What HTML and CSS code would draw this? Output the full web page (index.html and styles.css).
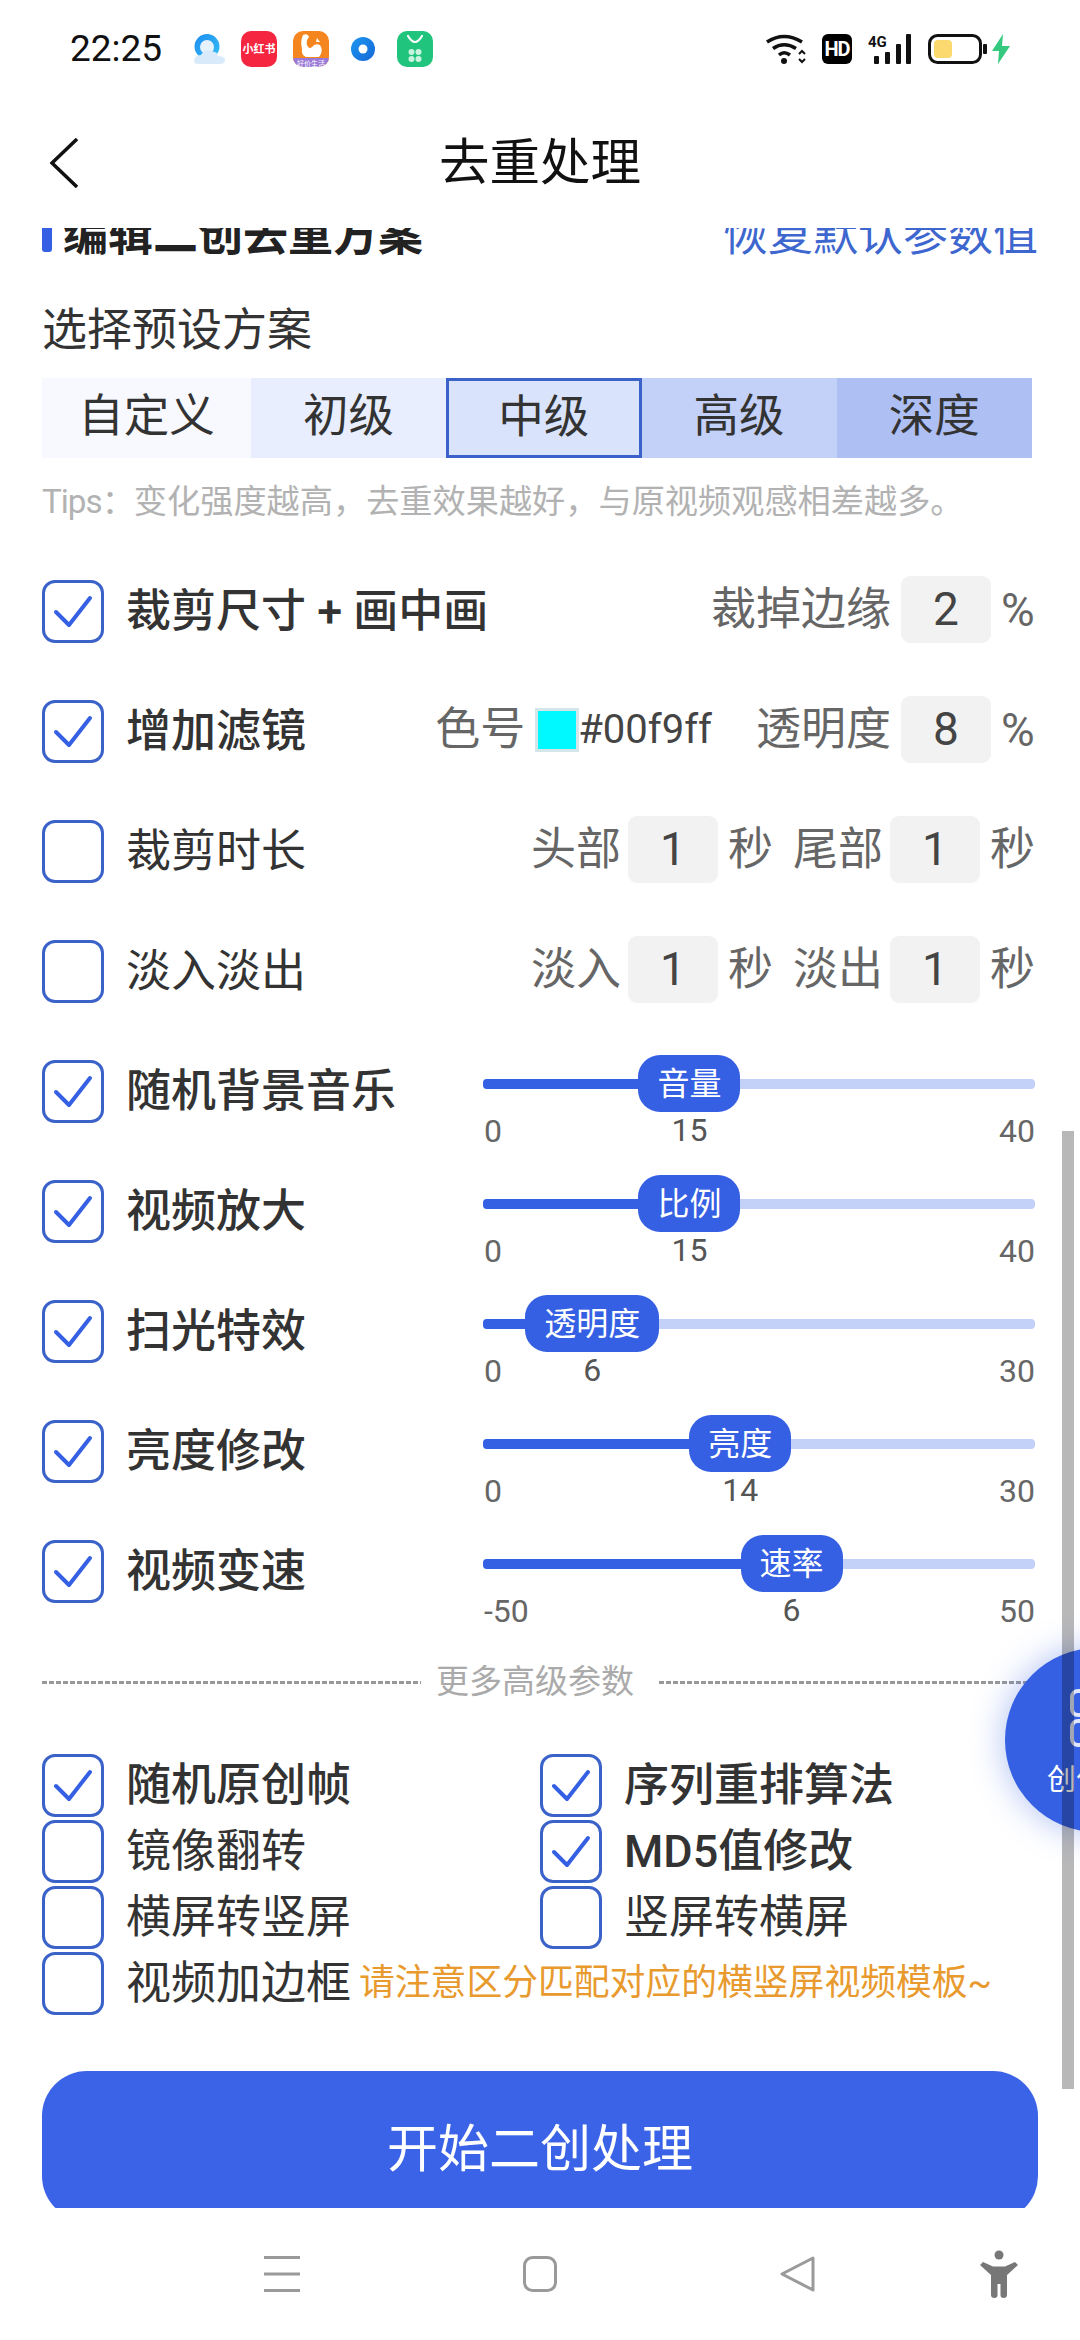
FILE: index.html
```html
<!DOCTYPE html>
<html lang="zh-CN">
<head>
<meta charset="utf-8">
<title>去重处理</title>
<link rel="stylesheet" href="styles.css">
</head>
<body>
<svg class="defs" width="0" height="0" aria-hidden="true">
  <symbol id="check" viewBox="0 0 62 63"><path d="M14 32 L27 45 L48 18" fill="none" stroke="#3560e3" stroke-width="4" stroke-linecap="round" stroke-linejoin="round"/></symbol>
</svg>
<div class="phone">
  <div class="status">
    <span class="time">22:25</span>
    <div class="apps">
      <svg class="app a-qq" width="33" height="30" viewBox="0 0 33 30"><defs><linearGradient id="qqg" x1="0" y1="0" x2="1" y2="1"><stop offset="0" stop-color="#1c8cf0"/><stop offset="1" stop-color="#37c0f5"/></linearGradient></defs><circle cx="15" cy="12.500" r="12.500" fill="url(#qqg)"/><circle cx="15" cy="13" r="7" fill="#e6f2fc"/><path d="M2 27 Q2 21 9 21 Q12 15 19 17 Q26 18 26 22 Q33 22 33 26 Q33 30 28 30 L6 30 Q2 30 2 27Z" fill="#d9ebfa"/></svg>
      <svg class="app a-red" width="36" height="36" viewBox="0 0 36 36"><rect width="36" height="36" rx="10" fill="#f5263f"/><text x="18" y="22" text-anchor="middle" class="app-text">小红书</text></svg>
      <svg class="app a-org" width="36" height="36" viewBox="0 0 36 36"><defs><clipPath id="orc"><rect width="36" height="36" rx="10"/></clipPath></defs><g clip-path="url(#orc)"><rect width="36" height="36" fill="#f5861f"/><rect y="27" width="36" height="9" fill="#9a78d8"/><path d="M10 4 Q15 2 16 6 Q13 9 14 14 Q16 19 19 16 Q22 12 27 14 Q31 20 26 26 L13 26 Q8 24 9 18 Q7 10 10 4Z" fill="#fff"/><path d="M24 7 L27 11 L23 11Z" fill="#fff"/></g><text x="18" y="34.500" text-anchor="middle" class="app-text-sm">好价生活</text></svg>
      <svg class="app a-don" width="24" height="24" viewBox="0 0 24 24"><defs><linearGradient id="dng" x1="0" y1="0" x2="1" y2="1"><stop offset="0" stop-color="#1f97ef"/><stop offset="1" stop-color="#1467d8"/></linearGradient></defs><circle cx="12" cy="12" r="12" fill="url(#dng)"/><circle cx="12" cy="12" r="4.500" fill="#fff"/></svg>
      <svg class="app a-grn" width="36" height="36" viewBox="0 0 36 36"><rect width="36" height="36" rx="10" fill="#20c47c"/><path d="M11 5 Q18 17 25 5" fill="none" stroke="#fff" stroke-width="2.200" stroke-linecap="round"/><g fill="#c9f3df"><circle cx="14.500" cy="21" r="3"/><circle cx="21.500" cy="21" r="3"/><circle cx="14.500" cy="28" r="3"/><circle cx="21.500" cy="28" r="3"/></g></svg>
    </div>
    <div class="sys">
      <svg width="40" height="30" viewBox="0 0 40 30"><g fill="none" stroke="#111" stroke-width="3.600"><path d="M1 8 Q18 -3 36 8"/><path d="M7 14.500 Q18 7 30 14.500"/><path d="M13 21 Q18 16.500 24 21"/></g><circle cx="18" cy="27" r="3" fill="#111"/><path d="M33 20 L36 17 L39 20 M33 25 L36 28 L39 25" fill="none" stroke="#111" stroke-width="2"/></svg>
      <span class="hd">HD</span>
      <svg width="44" height="30" viewBox="0 0 44 30"><text x="0" y="13" class="sig-text">4G</text><g fill="#111"><rect x="6" y="22" width="5" height="8" rx="1"/><rect x="17" y="18" width="5" height="12" rx="1"/><rect x="28" y="10" width="5" height="20" rx="1"/><rect x="38" y="0" width="5" height="30" rx="1"/></g></svg>
      <svg width="59" height="30" viewBox="0 0 59 30"><rect x="1.500" y="1.500" width="51" height="27" rx="8" fill="#fff" stroke="#111" stroke-width="3"/><rect x="6" y="6" width="18" height="18" rx="4" fill="#fbd96f"/><rect x="55" y="10" width="4" height="10" rx="1" fill="#111"/></svg>
      <svg class="bolt" width="18" height="30" viewBox="0 0 18 30"><path d="M11 0 L0 17 L7 17 L6 30 L18 12 L10 12Z" fill="#35c97f"/></svg>
    </div>
  </div>

  <header class="topbar">
    <div class="back"><svg width="28" height="50" viewBox="0 0 28 50"><path d="M27 1 L2 25 L27 49" fill="none" stroke="#111" stroke-width="3.500"/></svg></div>
    <h1 class="title">去重处理</h1>
    <div></div>
  </header>

  <main class="scroll">
    <div class="scroll-inner">
      <div class="section-head">
        <div class="section-title">编辑二创去重方案</div>
        <div class="reset">恢复默认参数值</div>
      </div>
      <div class="preset-title">选择预设方案</div>
      <div class="tabs">
        <div class="tab t0">自定义</div>
        <div class="tab t1">初级</div>
        <div class="tab t2">中级</div>
        <div class="tab t3">高级</div>
        <div class="tab t4">深度</div>
      </div>
      <div class="tips"><span class="tips-key">Tips：</span>变化强度越高，去重效果越好，与原视频观感相差越多。</div>

      <div class="rows">
        <div class="row">
          <span class="cb"><svg width="62" height="63"><use href="#check"/></svg></span>
          <span class="label bold">裁剪尺寸 + 画中画</span>
          <div class="ctrl">
            <span class="g">裁掉边缘</span><span class="box">2</span><span class="pct">%</span>
          </div>
        </div>
        <div class="row">
          <span class="cb"><svg width="62" height="63"><use href="#check"/></svg></span>
          <span class="label bold">增加滤镜</span>
          <div class="ctrl">
            <span class="g">色号</span><span class="swatch"></span><span class="hex">#00f9ff</span>
            <span class="g g-gap">透明度</span><span class="box">8</span><span class="pct">%</span>
          </div>
        </div>
        <div class="row">
          <span class="cb"></span>
          <span class="label">裁剪时长</span>
          <div class="ctrl">
            <span class="g tight">头部</span><span class="box">1</span><span class="g">秒</span>
            <span class="g g-gap2 tight">尾部</span><span class="box">1</span><span class="g">秒</span>
          </div>
        </div>
        <div class="row">
          <span class="cb"></span>
          <span class="label">淡入淡出</span>
          <div class="ctrl">
            <span class="g tight">淡入</span><span class="box">1</span><span class="g">秒</span>
            <span class="g g-gap2 tight">淡出</span><span class="box">1</span><span class="g">秒</span>
          </div>
        </div>
        <div class="row">
          <span class="cb"><svg width="62" height="63"><use href="#check"/></svg></span>
          <span class="label bold">随机背景音乐</span>
          <div class="slider" style="--p:37.4%">
            <div class="rail"><div class="fill"></div><div class="thumb">音量</div></div>
            <div class="scale"><span>0</span><span class="val">15</span><span>40</span></div>
          </div>
        </div>
        <div class="row">
          <span class="cb"><svg width="62" height="63"><use href="#check"/></svg></span>
          <span class="label bold">视频放大</span>
          <div class="slider" style="--p:37.4%">
            <div class="rail"><div class="fill"></div><div class="thumb">比例</div></div>
            <div class="scale"><span>0</span><span class="val">15</span><span>40</span></div>
          </div>
        </div>
        <div class="row">
          <span class="cb"><svg width="62" height="63"><use href="#check"/></svg></span>
          <span class="label bold">扫光特效</span>
          <div class="slider" style="--p:19.8%">
            <div class="rail"><div class="fill"></div><div class="thumb">透明度</div></div>
            <div class="scale"><span>0</span><span class="val">6</span><span>30</span></div>
          </div>
        </div>
        <div class="row">
          <span class="cb"><svg width="62" height="63"><use href="#check"/></svg></span>
          <span class="label bold">亮度修改</span>
          <div class="slider" style="--p:46.6%">
            <div class="rail"><div class="fill"></div><div class="thumb">亮度</div></div>
            <div class="scale"><span>0</span><span class="val">14</span><span>30</span></div>
          </div>
        </div>
        <div class="row">
          <span class="cb"><svg width="62" height="63"><use href="#check"/></svg></span>
          <span class="label bold">视频变速</span>
          <div class="slider" style="--p:55.9%">
            <div class="rail"><div class="fill"></div><div class="thumb">速率</div></div>
            <div class="scale"><span>-50</span><span class="val">6</span><span>50</span></div>
          </div>
        </div>
      </div>

      <div class="divider"><span class="dash"></span><span class="divider-text">更多高级参数</span><span class="dash"></span></div>

      <div class="more">
        <div class="opt"><span class="cb"><svg width="62" height="63"><use href="#check"/></svg></span><span class="label bold">随机原创帧</span></div>
        <div class="opt"><span class="cb"><svg width="62" height="63"><use href="#check"/></svg></span><span class="label bold">序列重排算法</span></div>
        <div class="opt"><span class="cb"></span><span class="label">镜像翻转</span></div>
        <div class="opt"><span class="cb"><svg width="62" height="63"><use href="#check"/></svg></span><span class="label bold">MD5值修改</span></div>
        <div class="opt"><span class="cb"></span><span class="label">横屏转竖屏</span></div>
        <div class="opt"><span class="cb"></span><span class="label">竖屏转横屏</span></div>
        <div class="opt opt-wide"><span class="cb"></span><span class="label">视频加边框</span><span class="warn">请注意区分匹配对应的横竖屏视频模板~</span></div>
      </div>

      <button class="start">开始二创处理</button>
    </div>
  </main>

  <nav class="nav">
    <svg class="n-menu" width="36" height="36" viewBox="0 0 36 36"><g fill="#9a9a9a"><rect width="36" height="3"/><rect y="16.500" width="36" height="3"/><rect y="33" width="36" height="3"/></g></svg>
    <svg class="n-home" width="34" height="36" viewBox="0 0 34 36"><rect x="1.500" y="1.500" width="31" height="33" rx="8" fill="none" stroke="#9a9a9a" stroke-width="3"/></svg>
    <svg class="n-back" width="35" height="36" viewBox="0 0 35 36"><path d="M33 2 L2 18 L33 34Z" fill="none" stroke="#9a9a9a" stroke-width="3" stroke-linejoin="round"/></svg>
    <svg class="n-person" width="38" height="48" viewBox="0 0 38 48"><g fill="#777"><circle cx="19" cy="5" r="4.500"/><path d="M0 15 L3 12 L13 16.500 L25 16.500 L35 12 L38 15 L27 25 L27 45 Q27 48 23.500 48 Q20.500 48 20.500 45 L20.500 34 L17.500 34 L17.500 45 Q17.500 48 14.500 48 Q11 48 11 45 L11 25Z"/></g></svg>
  </nav>

  <aside class="fab">
    <svg class="fab-icon" width="70" height="58" viewBox="0 0 70 58"><g fill="none" stroke="#dfe6fb" stroke-width="4"><rect x="2" y="2" width="28" height="24" rx="6"/><rect x="40" y="2" width="28" height="24" rx="6"/><rect x="2" y="32" width="28" height="24" rx="6"/><rect x="40" y="32" width="28" height="24" rx="6"/></g></svg>
    <span class="fab-text">创作中心</span>
  </aside>
  <div class="scrollbar"></div>
</div>
</body>
</html>
```
FILE: styles.css
```css
* { box-sizing: border-box; }
html, body { margin: 0; padding: 0; background: #fff; }
body { font-family: Roboto, "Noto Sans CJK SC", "Noto Sans", sans-serif; color: #333; }
.defs { position: absolute; }

.phone { position: relative; width: 1080px; height: 2340px; overflow: hidden; background: #fff; display: flex; flex-direction: column; }

/* status bar */
.status { height: 97px; flex: none; display: flex; align-items: center; padding: 0 70px; }
.time { font-size: 37px; color: #111; width: 92px; white-space: nowrap; }
.apps { display: flex; align-items: center; margin-left: 30px; }
.app { display: block; }
.a-red { margin-left: 16px; }
.a-org { margin-left: 16px; }
.a-don { margin-left: 22px; }
.a-grn { margin-left: 22px; }
.app-text { font-size: 11px; font-weight: 700; fill: #fff; }
.app-text-sm { font-size: 7px; fill: #fff; }
.sys { margin-left: auto; display: flex; align-items: center; gap: 16px; }
.sys .bolt { margin-left: -11px; }
.hd { width: 30px; height: 30px; border-radius: 6px; background: #000; color: #fff; font: 700 20px/30px "Roboto", sans-serif; text-align: center; letter-spacing: -1px; }
.sig-text { font: 700 15px Roboto, sans-serif; fill: #111; }

/* top bar */
.topbar { height: 131px; flex: none; display: grid; grid-template-columns: 1fr auto 1fr; align-items: center; }
.back { padding-left: 50px; display: flex; }
.title { margin: 0; font-size: 50.500px; font-weight: 400; color: #111; line-height: 60px; }

/* scroll area */
.scroll { height: 1980px; flex: none; overflow: hidden; }
.scroll-inner { margin-top: -22px; padding: 0 42px; }

.section-head { height: 60px; display: flex; justify-content: space-between; align-items: center; }
.section-title { font-size: 45px; font-weight: 700; color: #222; padding-left: 21px; position: relative; line-height: 66px; }
.section-title::before { content: ""; position: absolute; left: 0; top: 8px; width: 10px; height: 41px; border-radius: 3px; background: #3560e3; }
.reset { font-size: 45px; color: #3d66cf; line-height: 66px; margin-right: 0; }

.preset-title { margin-top: 30px; height: 66px; line-height: 69px; font-size: 45px; color: #333; }

.tabs { margin-top: 16px; width: 990px; height: 78px; display: grid; grid-template-columns: 209px repeat(4, 1fr); }
.tab { display: flex; align-items: center; justify-content: center; font-size: 45.500px; line-height: 74px; padding-bottom: 2px; color: #333; }
.t0 { background: #f8f9fe; }
.t1 { background: #e8eefd; }
.t2 { background: #d9e3fb; border: 3px solid #3a62c8; padding-bottom: 0; }
.t3 { background: #c3d0f8; }
.t4 { background: #aebff3; }

.tips { margin-top: 24px; height: 44px; line-height: 44px; font-size: 33.200px; color: #b2b2b2; white-space: nowrap; }
.tips-key { letter-spacing: -1px; }

.rows { margin-top: 56px; }
.row { height: 120px; display: flex; align-items: flex-start; }

.cb { flex: none; display: block; width: 62px; height: 63px; border: 3px solid #3a62c8; border-radius: 13px; background: #fff; position: relative; }
.cb svg { position: absolute; left: -3px; top: -3px; display: block; }
.label { margin-left: 22px; height: 60px; line-height: 63px; font-size: 45px; color: #333; white-space: nowrap; }
.bold { font-weight: 500; }

.ctrl { margin-left: auto; margin-right: 3px; margin-top: -4px; height: 67px; display: flex; align-items: center; gap: 10px; color: #666; font-size: 45px; white-space: nowrap; }
.g { line-height: 64px; }
.g-gap { margin-left: 34px; }
.g-gap2 { margin-left: 10px; }
.tight { margin-right: -3px; }
.box { width: 90px; height: 67px; border-radius: 9px; background: #f2f2f2; color: #444; font-size: 46px; line-height: 67px; text-align: center; }
.pct { font-size: 46px; width: 34px; color: #666; }
.swatch { width: 44px; height: 44px; background: #00f9ff; border: 3px solid #d4e6ea; }
.hex { font-size: 40px; color: #444; margin-left: -11px; }

.slider { margin-left: auto; margin-right: 3px; margin-top: -5px; width: 552px; }
.rail { position: relative; height: 57px; }
.rail::before { content: ""; position: absolute; left: 0; right: 0; top: 24px; height: 10px; border-radius: 4px; background: #c3d1f8; }
.fill { position: absolute; left: 0; top: 24px; height: 10px; width: var(--p); border-radius: 4px 0 0 4px; background: #3560e3; }
.thumb { position: absolute; left: var(--p); top: 0; height: 57px; transform: translateX(-50%); padding: 0 19px; border-radius: 22px; background: #3560e3; color: #fff; font-size: 32px; line-height: 58px; white-space: nowrap; }
.scale { position: relative; height: 36px; display: flex; justify-content: space-between; padding-left: 1px; font-size: 32px; line-height: 38px; color: #666; }
.val { position: absolute; left: var(--p); transform: translateX(-50%); top: -1px; color: #555; }

.divider { height: 44px; display: flex; align-items: center; gap: 15px; }
.dash { flex: 1; height: 3px; background: repeating-linear-gradient(90deg, #999 0 5px, transparent 5px 7px); }
.divider-text { font-size: 33px; color: #aaa; line-height: 46px; margin-right: 10px; }

.more { margin-top: 50px; display: grid; grid-template-columns: 498px 1fr; grid-auto-rows: 66px; }
.opt { display: flex; align-items: flex-start; }
.opt-wide { grid-column: 1 / -1; }
.warn { margin-left: 8px; font-size: 35.800px; color: #e89a2e; line-height: 62px; white-space: nowrap; }

.start { display: block; margin-top: 53px; width: 996px; height: 150px; padding: 0 0 3px; border: 0; border-radius: 45px; background: #3b63e8; color: #fff; font-family: inherit; font-size: 51px; font-weight: 400; text-align: center; }

/* bottom nav */
.nav { flex: 1; display: flex; align-items: flex-start; padding: 42px 0 0 264px; }
.nav svg { display: block; }
.n-menu, .n-home, .n-back { margin-top: 6px; }
.n-home { margin-left: 223px; }
.n-back { margin-left: 223px; }
.n-person { margin-left: 165px; }

/* overlays */
.fab { position: absolute; left: 1005px; top: 1648px; width: 184px; height: 184px; border-radius: 50%; background: #3560e3; box-shadow: 0 0 34px rgba(53, 96, 227, .4); display: flex; flex-direction: column; align-items: center; padding: 41px 0 0 16px; color: #fff; }
.fab-icon { display: block; flex: none; }
.fab-text { margin-top: 15px; font-size: 29px; line-height: 36px; white-space: nowrap; }
.scrollbar { position: absolute; left: 1062px; top: 1131px; width: 12px; height: 958px; background: rgba(0, 0, 0, .28); }
```
